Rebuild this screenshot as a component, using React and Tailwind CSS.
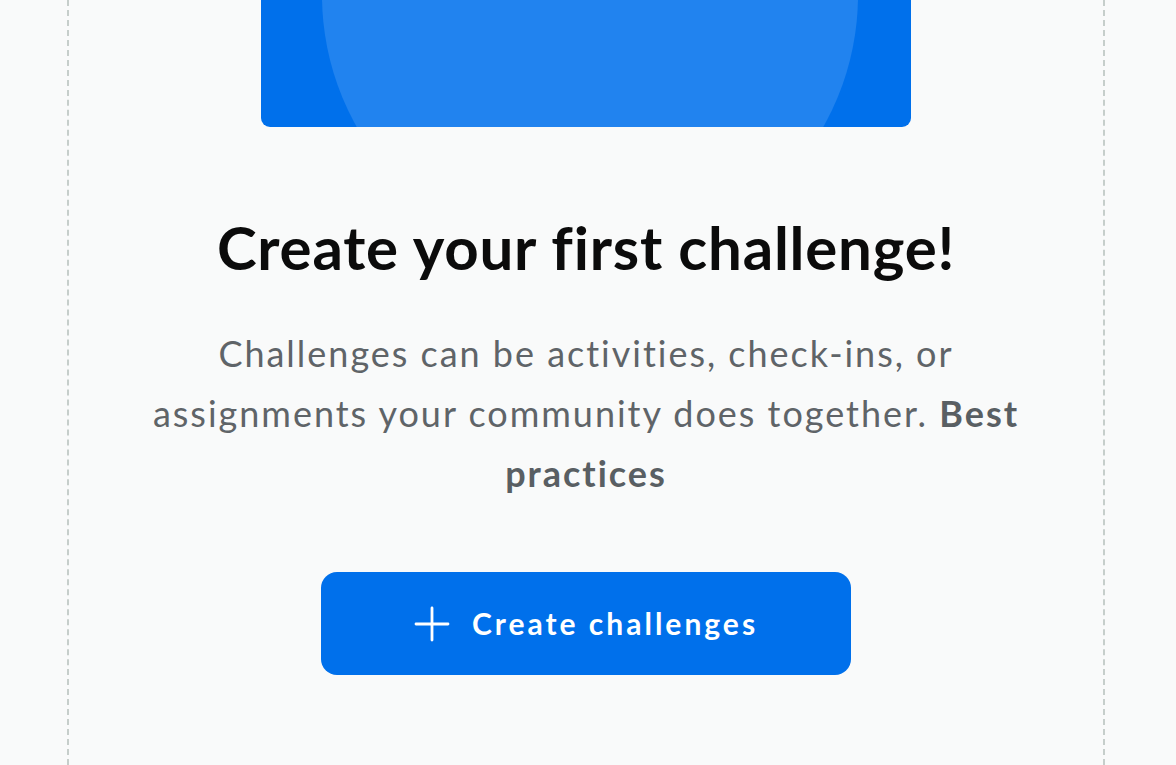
export default function App() {
    return (
        <div className="min-h-screen bg-[#f9fafa] font-['Lato',sans-serif]">
            <div className="ml-[67px] mr-[71px] min-h-screen border-x-2 border-dashed border-[#c6cecb] flex flex-col items-center">
                {/* Banner */}
                <div className="relative w-[650px] h-[127px] bg-[#0070eb] rounded-b-[9px] overflow-hidden">
                    <div className="absolute left-[61px] top-[-273px] w-[536px] h-[536px] rounded-full bg-[#2183ef]" />
                </div>

                <h1 className="mt-[84px] text-[60px] leading-[72px] font-bold tracking-[0.013em] text-[#0b0b0b]">
                    Create your first challenge!
                </h1>

                <p className="mt-[40px] w-[900px] text-center text-[36px] leading-[60px] tracking-[0.055em] text-[#5f6468]">
                    Challenges can be activities, check-ins, or assignments your community does together.{' '}
                    <span className="font-bold text-[#595f63]">Best practices</span>
                </p>

                <button className="mt-[69px] w-[530px] h-[103px] rounded-[16px] bg-[#0070eb] flex items-center justify-center gap-[22px] text-white">
                    <svg width="36" height="36" viewBox="0 0 36 36" fill="none" stroke="currentColor" strokeWidth="2.8" strokeLinecap="round">
                        <path d="M18 2v32M2 18h32" />
                    </svg>
                    <span className="text-[30px] font-bold tracking-[0.1em]">Create challenges</span>
                </button>
            </div>
        </div>
    );
}
